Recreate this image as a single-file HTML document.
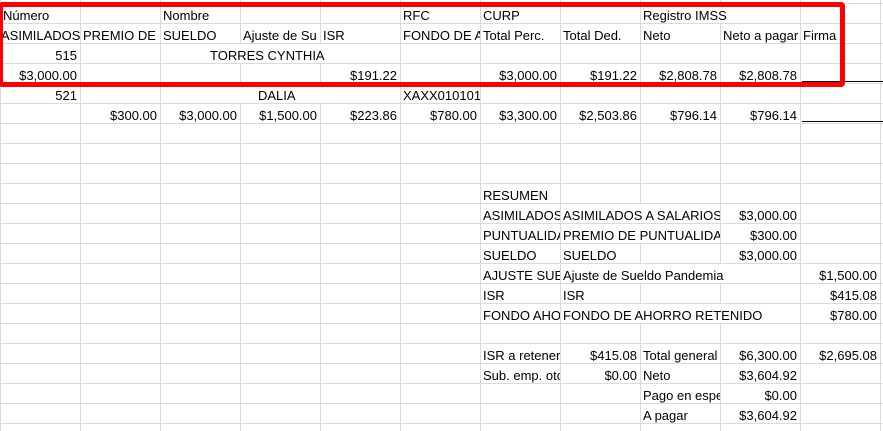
<!DOCTYPE html>
<html><head><meta charset="utf-8"><style>
html,body{margin:0;padding:0}
body{width:883px;height:431px;overflow:hidden;position:relative;background:#fff;
background-image:linear-gradient(to right,#dadada 1px,transparent 1px),linear-gradient(to bottom,#dadada 1px,transparent 1px);
background-size:80px 20px;background-position:0px 3px;
font-family:"Liberation Sans",sans-serif;font-size:13px;color:#000}
.c{position:absolute;height:19px;line-height:23px;white-space:nowrap;overflow:hidden;background:#fff;padding:0 2px;box-sizing:border-box}
.r{text-align:right;padding-right:3px}
.w{position:absolute;background:#fff;height:19px}
.u{position:absolute;height:1px;background:#000;left:802px;width:81px}
.box{position:absolute;left:-2px;top:2px;width:847px;height:85px;border:5px solid #f00;box-sizing:border-box;border-radius:4px}
</style></head><body>
<div class="w" style="left:161px;top:44px;width:238px"></div>
<div class="w" style="left:161px;top:84px;width:238px"></div>

<div class="c" style="left:1px;top:4px;width:79px">Número</div>
<div class="c" style="left:161px;top:4px;width:79px">Nombre</div>
<div class="c" style="left:401px;top:4px;width:79px">RFC</div>
<div class="c" style="left:481px;top:4px;width:79px">CURP</div>
<div class="c" style="left:641px;top:4px;width:159px">Registro IMSS</div>

<div class="c" style="left:1px;top:24px;width:79px;padding-left:0">ASIMILADOS</div>
<div class="c" style="left:81px;top:24px;width:79px">PREMIO DE P</div>
<div class="c" style="left:161px;top:24px;width:79px">SUELDO</div>
<div class="c" style="left:241px;top:24px;width:79px">Ajuste de Su</div>
<div class="c" style="left:321px;top:24px;width:79px">ISR</div>
<div class="c" style="left:401px;top:24px;width:79px">FONDO DE A</div>
<div class="c" style="left:481px;top:24px;width:79px">Total Perc.</div>
<div class="c" style="left:561px;top:24px;width:79px">Total Ded.</div>
<div class="c" style="left:641px;top:24px;width:79px">Neto</div>
<div class="c" style="left:721px;top:24px;width:79px">Neto a pagar</div>
<div class="c" style="left:801px;top:24px;width:79px">Firma</div>

<div class="c r" style="left:1px;top:44px;width:79px">515</div>
<div class="c" style="left:208px;top:44px;width:130px">TORRES CYNTHIA</div>

<div class="c r" style="left:1px;top:64px;width:79px">$3,000.00</div>
<div class="c r" style="left:321px;top:64px;width:79px">$191.22</div>
<div class="c r" style="left:481px;top:64px;width:79px">$3,000.00</div>
<div class="c r" style="left:561px;top:64px;width:79px">$191.22</div>
<div class="c r" style="left:641px;top:64px;width:79px">$2,808.78</div>
<div class="c r" style="left:721px;top:64px;width:79px">$2,808.78</div>
<div class="u" style="top:81px"></div>

<div class="c r" style="left:1px;top:84px;width:79px">521</div>
<div class="c" style="left:256px;top:84px;width:60px">DALIA</div>
<div class="c" style="left:401px;top:84px;width:79px">XAXX0101010</div>

<div class="c r" style="left:81px;top:104px;width:79px">$300.00</div>
<div class="c r" style="left:161px;top:104px;width:79px">$3,000.00</div>
<div class="c r" style="left:241px;top:104px;width:79px">$1,500.00</div>
<div class="c r" style="left:321px;top:104px;width:79px">$223.86</div>
<div class="c r" style="left:401px;top:104px;width:79px">$780.00</div>
<div class="c r" style="left:481px;top:104px;width:79px">$3,300.00</div>
<div class="c r" style="left:561px;top:104px;width:79px">$2,503.86</div>
<div class="c r" style="left:641px;top:104px;width:79px">$796.14</div>
<div class="c r" style="left:721px;top:104px;width:79px">$796.14</div>
<div class="u" style="top:121px"></div>

<div class="c" style="left:481px;top:184px;width:79px">RESUMEN</div>
<div class="c" style="left:481px;top:204px;width:79px">ASIMILADOS</div>
<div class="c" style="left:561px;top:204px;width:159px">ASIMILADOS A SALARIOS</div>
<div class="c r" style="left:721px;top:204px;width:79px">$3,000.00</div>
<div class="c" style="left:481px;top:224px;width:79px">PUNTUALIDAD</div>
<div class="c" style="left:561px;top:224px;width:159px">PREMIO DE PUNTUALIDAD</div>
<div class="c r" style="left:721px;top:224px;width:79px">$300.00</div>
<div class="c" style="left:481px;top:244px;width:79px">SUELDO</div>
<div class="c" style="left:561px;top:244px;width:79px">SUELDO</div>
<div class="c r" style="left:721px;top:244px;width:79px">$3,000.00</div>
<div class="c" style="left:481px;top:264px;width:79px">AJUSTE SUELDO</div>
<div class="c" style="left:561px;top:264px;width:200px">Ajuste de Sueldo Pandemia</div>
<div class="c r" style="left:801px;top:264px;width:79px">$1,500.00</div>
<div class="c" style="left:481px;top:284px;width:79px">ISR</div>
<div class="c" style="left:561px;top:284px;width:79px">ISR</div>
<div class="c r" style="left:801px;top:284px;width:79px">$415.08</div>
<div class="c" style="left:481px;top:304px;width:79px">FONDO AHORRO</div>
<div class="c" style="left:561px;top:304px;width:239px">FONDO DE AHORRO RETENIDO</div>
<div class="c r" style="left:801px;top:304px;width:79px">$780.00</div>

<div class="c" style="left:481px;top:344px;width:79px">ISR a retener</div>
<div class="c r" style="left:561px;top:344px;width:79px">$415.08</div>
<div class="c" style="left:641px;top:344px;width:79px">Total general</div>
<div class="c r" style="left:721px;top:344px;width:79px">$6,300.00</div>
<div class="c r" style="left:801px;top:344px;width:79px">$2,695.08</div>
<div class="c" style="left:481px;top:364px;width:79px">Sub. emp. otorgado</div>
<div class="c r" style="left:561px;top:364px;width:79px">$0.00</div>
<div class="c" style="left:641px;top:364px;width:79px">Neto</div>
<div class="c r" style="left:721px;top:364px;width:79px">$3,604.92</div>
<div class="c" style="left:641px;top:384px;width:79px">Pago en especie</div>
<div class="c r" style="left:721px;top:384px;width:79px">$0.00</div>
<div class="c" style="left:641px;top:404px;width:79px">A pagar</div>
<div class="c r" style="left:721px;top:404px;width:79px">$3,604.92</div>

<div class="box"></div>
</body></html>
